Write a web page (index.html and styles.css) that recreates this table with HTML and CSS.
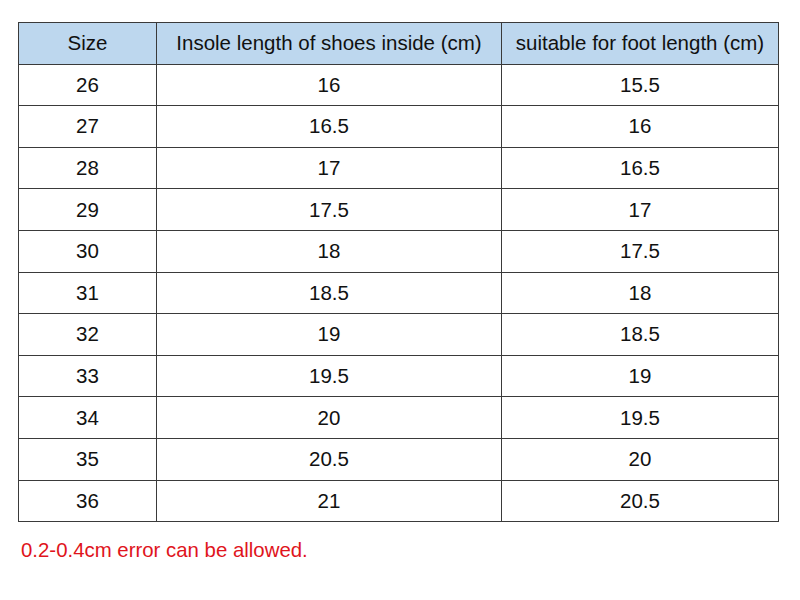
FILE: index.html
```html
<!DOCTYPE html>
<html>
<head>
<meta charset="utf-8">
<link rel="stylesheet" href="styles.css">
</head>
<body>
<div class="page">
<table class="sizes">
<colgroup><col class="c1"><col class="c2"><col class="c3"></colgroup>
<thead>
<tr><th>Size</th><th>Insole length of shoes inside (cm)</th><th>suitable for foot length (cm)</th></tr>
</thead>
<tbody>
<tr><td>26</td><td>16</td><td>15.5</td></tr>
<tr><td>27</td><td>16.5</td><td>16</td></tr>
<tr><td>28</td><td>17</td><td>16.5</td></tr>
<tr><td>29</td><td>17.5</td><td>17</td></tr>
<tr><td>30</td><td>18</td><td>17.5</td></tr>
<tr><td>31</td><td>18.5</td><td>18</td></tr>
<tr><td>32</td><td>19</td><td>18.5</td></tr>
<tr><td>33</td><td>19.5</td><td>19</td></tr>
<tr><td>34</td><td>20</td><td>19.5</td></tr>
<tr><td>35</td><td>20.5</td><td>20</td></tr>
<tr><td>36</td><td>21</td><td>20.5</td></tr>
</tbody>
</table>
<p class="note">0.2-0.4cm error can be allowed.</p>
</div>
</body>
</html>
```
FILE: styles.css
```css
html, body {
  margin: 0;
  padding: 0;
  background: #ffffff;
}
.page {
  padding: 22px 0 0 18px;
  font-family: "Liberation Sans", Arial, sans-serif;
}
.sizes {
  border-collapse: collapse;
  table-layout: fixed;
  width: 760px;
  font-size: 20.5px;
  color: #111111;
}
.c1 { width: 138px; }
.c2 { width: 345px; }
.c3 { width: 277px; }
.sizes th, .sizes td {
  border: 1px solid #3a3a3a;
  text-align: center;
  font-weight: normal;
  padding: 0;
  height: 40.6px;
}
.sizes th {
  background: #bdd7ee;
}
.note {
  margin: 16px 0 0 3px;
  color: #e0141c;
  font-size: 20.4px;
  line-height: 24px;
  font-family: "Liberation Sans", Arial, sans-serif;
}
```
